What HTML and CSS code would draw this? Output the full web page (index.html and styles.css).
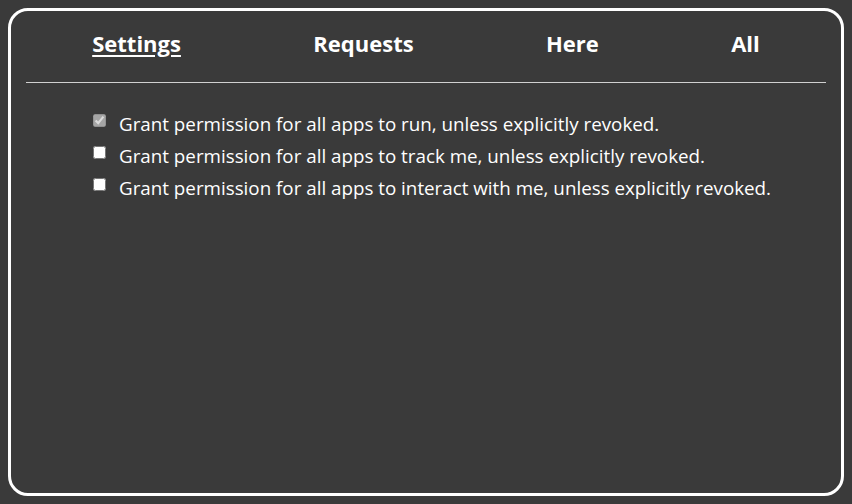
FILE: index.html
```html
<!DOCTYPE html>
<html lang="en">
<head>
    <meta charset="UTF-8">
    <meta name="viewport" content="width=device-width, initial-scale=1.0">
    <title>Settings</title>
    <link rel="stylesheet" href="styles.css">
</head>
<body>
    <div class="panel">
        <!-- Tabs -->
        <nav class="tabs">
            <a href="#" class="tab active">Settings</a>
            <a href="#" class="tab">Requests</a>
            <a href="#" class="tab">Here</a>
            <a href="#" class="tab">All</a>
        </nav>
        <hr class="divider">

        <!-- Permissions -->
        <div class="options">
            <label class="option">
                <input type="checkbox" checked disabled>
                <span>Grant permission for all apps to run, unless explicitly revoked.</span>
            </label>
            <label class="option">
                <input type="checkbox">
                <span>Grant permission for all apps to track me, unless explicitly revoked.</span>
            </label>
            <label class="option">
                <input type="checkbox">
                <span>Grant permission for all apps to interact with me, unless explicitly revoked.</span>
            </label>
        </div>
    </div>
</body>
</html>
```

FILE: styles.css
```css
html, body {
    height: 100%;
}

body {
    margin: 0;
    padding: 8px;
    box-sizing: border-box;
    background-color: #3a3a3a;
    color: #ffffff;
    font-family: "Open Sans", "Noto Sans", sans-serif;
}

.panel {
    height: 100%;
    box-sizing: border-box;
    border: 3px solid #ffffff;
    border-radius: 20px;
    padding: 0 15px;
}

.tabs {
    display: flex;
    justify-content: space-around;
    padding-top: 18px;
    height: 52px;
    box-sizing: border-box;
}

.tab {
    color: #ffffff;
    text-decoration: none;
    font-weight: bold;
    font-size: 22px;
    line-height: 28px;
}

.tab.active {
    text-decoration: underline;
    text-underline-offset: 3px;
}

.divider {
    margin: 19px 0 0;
    border: none;
    border-top: 1px solid #d0d0d0;
}

.options {
    padding: 25px 0 0 63px;
    display: flex;
    flex-direction: column;
}

.option {
    display: flex;
    align-items: center;
    gap: 13px;
    font-size: 18.8px;
    line-height: 32px;
}

.option input {
    margin: 0 0 8px 4px;
    width: 13px;
    height: 13px;
}
```
